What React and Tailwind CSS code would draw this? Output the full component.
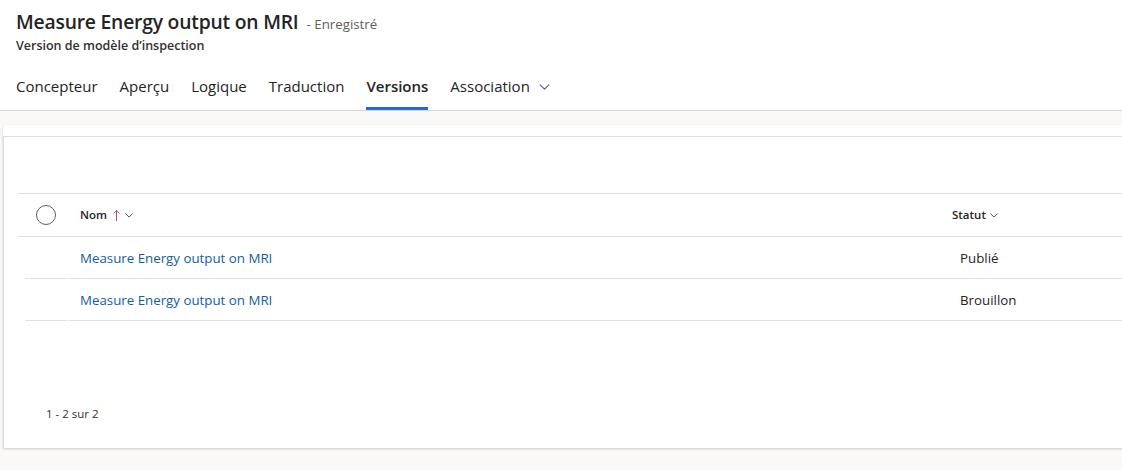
import React from 'react'

const tabs = ['Concepteur', 'Aperçu', 'Logique', 'Traduction', 'Versions', 'Association']

const rows = [
  { name: 'Measure Energy output on MRI', status: 'Publié' },
  { name: 'Measure Energy output on MRI', status: 'Brouillon' },
]

const Chevron = ({ className }) => (
  <svg viewBox="0 0 12 12" className={className} fill="none" stroke="currentColor" strokeWidth="1" strokeLinecap="round" strokeLinejoin="round">
    <path d="M2 4.5 6 8.5 10 4.5" />
  </svg>
)

const App = () => {
  return (
    <div className="w-[1122px] h-[470px] overflow-hidden bg-[#faf9f8] text-[#242424]" style={{ fontFamily: '"Open Sans", "Noto Sans", sans-serif' }}>
      {/* header */}
      <div className="bg-white border-b border-[#d6d6d6]">
        <div className="pt-[8px] px-[16px]">
          <div className="flex items-baseline">
            <h1 className="text-[19.3px] font-semibold leading-[28px] tracking-[-0.2px]">Measure Energy output on MRI</h1>
            <span className="ml-[8px] text-[13.3px] text-[#605e5c]">- Enregistré</span>
          </div>
          <div className="mt-[1px] text-[12.5px] font-semibold leading-[18px] text-[#323130]">Version de modèle d’inspection</div>
        </div>
        <div className="mt-[10px] flex px-[16px] gap-[22px]">
          {tabs.map((t) => (
            <div key={t} className="relative h-[45px] flex items-center pb-[2px]">
              <span className={t === 'Versions' ? 'text-[15px] font-semibold' : 'text-[15px]'}>{t}</span>
              {t === 'Association' && <Chevron className="ml-[8px] w-[13px] h-[13px] text-[#605e5c]" />}
              {t === 'Versions' && <div className="absolute left-0 right-0 bottom-0 h-[3px] bg-[#2266e3]" />}
            </div>
          ))}
        </div>
      </div>

      {/* card */}
      <div className="mt-[14px] ml-[3px] w-[1140px] h-[323px] bg-white rounded-tl-[4px] shadow-[0_1px_3px_rgba(0,0,0,0.18)]">
        <div className="h-[11px]" />
        <div className="border-t border-l border-[#e1dfdd] h-[312px] flex flex-col">
          <div className="h-[56px]" />
          <div className="ml-[14px]">
            {/* column header */}
            <div className="flex items-center h-[44px] border-t border-b border-[#e1dfdd]">
              <div className="w-[48px] flex justify-center pl-[8px]">
                <div className="w-[20px] h-[20px] rounded-full border border-[#605e5c]" />
              </div>
              <div className="ml-[14px] flex items-center w-[872px]">
                <span className="text-[11.5px] font-semibold">Nom</span>
                <svg viewBox="0 0 8 14" className="ml-[6px] w-[7px] h-[13px] text-[#9a3a56]" fill="none" stroke="currentColor" strokeWidth="1" strokeLinecap="round">
                  <path d="M4 13V1.5M1 4.5 4 1.5 7 4.5" />
                </svg>
                <Chevron className="ml-[4px] w-[10px] h-[10px] text-[#323130]" />
              </div>
              <div className="flex items-center">
                <span className="text-[11.5px] font-semibold">Statut</span>
                <Chevron className="ml-[3px] w-[10px] h-[10px] text-[#323130]" />
              </div>
            </div>
            {rows.map((r, i) => (
              <div key={i} className="flex items-center h-[42px] ml-[7px]">
                <div className="w-[42px] h-full border-b border-[#e1dfdd]" />
                <div className="ml-[1px] flex-1 h-full border-b border-[#e1dfdd] flex items-center pt-[2px]">
                  <span className="ml-[12px] w-[880px] text-[13.3px] text-[#115ea3]">{r.name}</span>
                  <span className="text-[13.3px] text-[#242424]">{r.status}</span>
                </div>
              </div>
            ))}
          </div>
          <div className="mt-auto mb-[26px] ml-[42px] text-[11.5px] text-[#323130]">1 - 2 sur 2</div>
        </div>
      </div>
    </div>
  )
}

export default App
